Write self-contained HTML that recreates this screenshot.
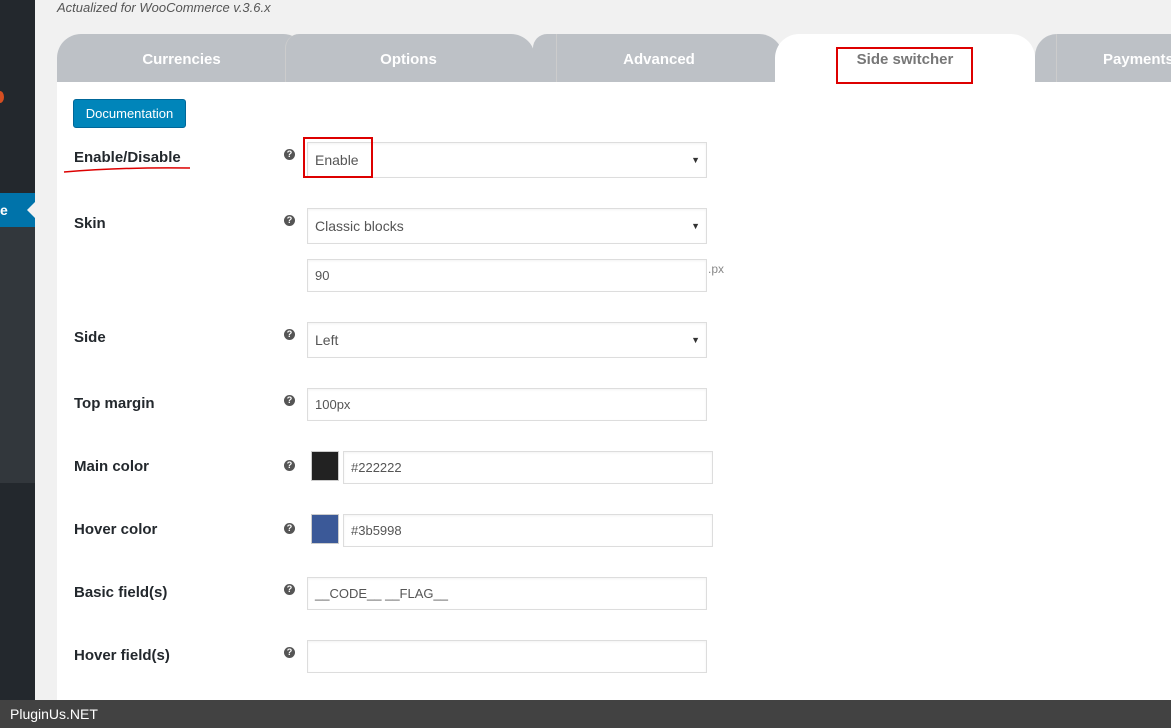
<!DOCTYPE html>
<html><head><meta charset="utf-8"><style>
*{box-sizing:border-box;margin:0;padding:0}
body{width:1171px;height:728px;overflow:hidden;background:#f1f1f1;font-family:"Liberation Sans",sans-serif;position:relative}
.a{position:absolute}
.tab{position:absolute;top:34px;height:48px;background:#bdc1c6;color:#fff;font-weight:bold;font-size:15px;text-align:center;line-height:52px;border-radius:24px 24px 0 0}
.lbl{position:absolute;left:74px;font-size:15px;font-weight:bold;color:#23282d}
.q{position:absolute;left:284px;width:11px;height:11px;border-radius:50%;background:#555;color:#fff;font-size:9px;font-weight:bold;text-align:center;line-height:11px}
.in{position:absolute;left:307px;width:400px;border:1px solid #ddd;background:#fff;font-size:14px;color:#555;padding-left:7px;box-shadow:inset 0 1px 2px rgba(0,0,0,.05)}
.arr{position:absolute;right:6px;font-size:9px;color:#333}
</style></head><body>
<div class="a" style="left:0;top:0;width:35px;height:700px;background:#23282d"></div>
<div class="a" style="left:0;top:227px;width:35px;height:256px;background:#32373c"></div>
<div class="a" style="left:0;top:193px;width:35px;height:34px;background:#0073aa;color:#fff;font-size:14px;font-weight:bold;line-height:34px">e</div>
<div class="a" style="left:27px;top:202px;width:0;height:0;border:8px solid transparent;border-right-color:#f1f1f1;border-left:none"></div>
<div class="a" style="left:-4px;top:91px;width:8px;height:12px;border-radius:50%;background:#d54e21"></div>
<div class="a" style="left:57px;top:0;font-size:13px;font-style:italic;color:#555">Actualized for WooCommerce v.3.6.x</div>
<div class="a" style="left:57px;top:82px;width:1114px;height:618px;background:#fff"></div>
<div class="tab" style="left:57px;width:250px;border-right:1px solid #ccc">Currencies</div>
<div class="tab" style="left:285px;width:250px;border-radius:14px 24px 0 0;border-left:1px solid #ccc"></div>
<div class="tab" style="left:306px;width:205px;border-radius:0;background:transparent">Options</div>
<div class="tab" style="left:533px;width:250px;border-radius:14px 24px 0 0"></div>
<div class="tab" style="left:556px;width:205px;border-radius:0;background:transparent;border-left:1px solid #ccc">Advanced</div>
<div class="tab" style="left:1035px;width:150px;border-radius:22px 0 0 0"></div>
<div class="tab" style="left:775px;width:260px;background:#fff;color:#777">Side switcher</div>
<div class="tab" style="left:1056px;width:130px;border-radius:0;background:transparent;border-left:1px solid #ccc;text-align:left;padding-left:46px">Payments</div>
<div class="a" style="left:836px;top:47px;width:137px;height:37px;border:2px solid #d00"></div>
<div class="a" style="left:73px;top:99px;width:113px;height:29px;background:#0085ba;border:1px solid #006799;border-radius:3px;color:#fff;font-size:13px;text-align:center;line-height:27px">Documentation</div>

<div class="lbl" style="top:149px">Enable/Disable</div>
<svg class="a" style="left:63px;top:166px" width="128" height="8"><path d="M1 6 Q60 1 127 2" stroke="#d00" stroke-width="1.5" fill="none"/></svg>
<div class="q" style="top:149px">?</div>
<div class="in" style="top:142px;height:36px;line-height:34px">Enable<span class="arr">▼</span></div>
<div class="a" style="left:303px;top:137px;width:70px;height:41px;border:2px solid #d00"></div>

<div class="lbl" style="top:215px">Skin</div>
<div class="q" style="top:215px">?</div>
<div class="in" style="top:208px;height:36px;line-height:34px">Classic blocks<span class="arr">▼</span></div>
<div class="in" style="top:259px;height:33px;line-height:31px;font-size:13px">90</div>
<div class="a" style="left:708px;top:262px;font-size:12px;color:#888">.px</div>

<div class="lbl" style="top:329px">Side</div>
<div class="q" style="top:329px">?</div>
<div class="in" style="top:322px;height:36px;line-height:34px">Left<span class="arr">▼</span></div>

<div class="lbl" style="top:395px">Top margin</div>
<div class="q" style="top:395px">?</div>
<div class="in" style="top:388px;height:33px;line-height:31px;font-size:13px">100px</div>

<div class="lbl" style="top:458px">Main color</div>
<div class="q" style="top:460px">?</div>
<div class="a" style="left:311px;top:451px;width:28px;height:30px;background:#222;border:1px solid #ccc"></div>
<div class="in" style="left:343px;width:370px;top:451px;height:33px;line-height:31px;font-size:13px">#222222</div>

<div class="lbl" style="top:521px">Hover color</div>
<div class="q" style="top:523px">?</div>
<div class="a" style="left:311px;top:514px;width:28px;height:30px;background:#3b5998;border:1px solid #ccc"></div>
<div class="in" style="left:343px;width:370px;top:514px;height:33px;line-height:31px;font-size:13px">#3b5998</div>

<div class="lbl" style="top:584px">Basic field(s)</div>
<div class="q" style="top:584px">?</div>
<div class="in" style="top:577px;height:33px;line-height:31px;font-size:13px">__CODE__ __FLAG__</div>

<div class="lbl" style="top:647px">Hover field(s)</div>
<div class="q" style="top:647px">?</div>
<div class="in" style="top:640px;height:33px"></div>

<div class="a" style="left:0;top:700px;width:1171px;height:28px;background:#424242;color:#fff;font-size:14px;line-height:28px;padding-left:10px">PluginUs.NET</div>
</body></html>
